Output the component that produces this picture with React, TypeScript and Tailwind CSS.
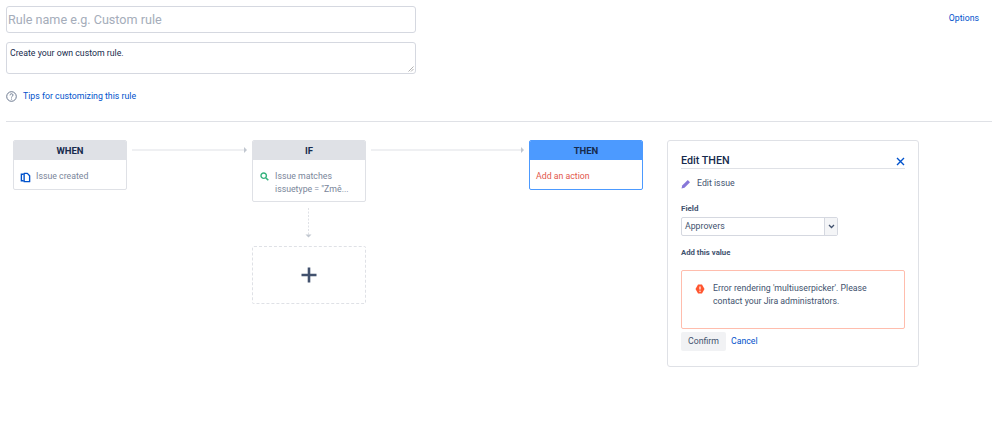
const font = { fontFamily: 'Roboto, sans-serif' };

function Arrow({ width }: { width: number }) {
  return (
    <svg width={width} height="8" viewBox={`0 0 ${width} 8`} className="block">
      <path d={`M0 4H${width - 3}`} stroke="#dfe1e6" strokeWidth="1" />
      <path d={`M${width - 3} 1l3 3-3 3z`} fill="#c1c7d0" />
    </svg>
  );
}

function Card({
  title,
  active,
  children,
}: {
  title: string;
  active?: boolean;
  children: React.ReactNode;
}) {
  return (
    <div
      className={`w-[114px] shrink-0 overflow-hidden rounded-[2px] border bg-white ${
        active ? "border-[#4c9aff]" : "border-[#dfe1e6]"
      }`}
    >
      <div
        className={`flex h-[19px] items-center justify-center pt-[1px] text-[9.5px] font-bold text-[#172b4d] ${
          active ? "bg-[#4c9aff]" : "bg-[#dfe1e6]"
        }`}
      >
        {title}
      </div>
      {children}
    </div>
  );
}

export default function App() {
  return (
    <div
      className="flex h-[435px] w-[998px] flex-col overflow-hidden bg-white pl-[6px] pr-[6px] pt-[6px] text-[#42526e]"
      style={font}
    >
      <div className="flex items-start justify-between">
        <div className="flex w-[410px] flex-col">
          <div className="flex h-[27px] items-center rounded-[3px] border border-[#d5d8e0] px-[1px] pt-[1px] text-[12.6px] text-[#a5adba]">
            Rule name e.g. Custom rule
          </div>
          <div className="relative mt-[9px] h-[32px] rounded-[3px] border border-[#d5d8e0] px-[3px] pt-[3px] text-[8.75px] leading-[14px] text-[#172b4d]">
            Create your own custom rule.
            <svg width="6" height="6" viewBox="0 0 6 6" className="absolute bottom-[1px] right-[1px]">
              <path d="M0.5 5.5L5.5 0.5M3 5.5L5.5 3" stroke="#8f8f8f" strokeWidth="0.7" />
            </svg>
          </div>
          <div className="mt-[15px] flex h-[14px] items-center">
            <svg width="11" height="11" viewBox="0 0 11 11" fill="none" className="shrink-0">
              <circle cx="5.5" cy="5.5" r="4.8" stroke="#5e6c84" strokeWidth="0.9" />
              <path d="M4 4.3c0-2 3-2 3-.2 0 1.1-1.5 1.1-1.5 2.4" stroke="#5e6c84" strokeWidth="0.9" />
              <circle cx="5.5" cy="8" r="0.6" fill="#5e6c84" />
            </svg>
            <a className="ml-[6px] pt-[1px] text-[8.75px] text-[#0052cc]">Tips for customizing this rule</a>
          </div>
        </div>
        <a className="mr-[13px] mt-[6px] text-[8.75px] leading-[12px] text-[#0052cc]">Options</a>
      </div>

      <div className="mt-[18px] h-px bg-[#dfe1e6]" />

      <div className="mt-[18px] flex items-start pl-[7px]">
        <Card title="WHEN">
          <div className="flex h-[29px] items-center pl-[6px] pt-[5px] text-[8.75px] text-[#7a869a]">
            <svg width="11" height="11" viewBox="0 0 12 12" className="shrink-0" fill="none">
              <path d="M4 2.5H1.5v7H4" stroke="#0052cc" strokeWidth="1.5" />
              <path d="M4.5 1.5h3.5l2.5 2.5v6.5h-6z" stroke="#0052cc" strokeWidth="1.5" strokeLinejoin="round" />
            </svg>
            <span className="ml-[5px]">Issue created</span>
          </div>
        </Card>
        <div className="ml-[5px] mr-[5px] mt-[6px]">
          <Arrow width={115} />
        </div>

        <div className="flex flex-col items-center">
          <Card title="IF">
            <div className="flex h-[41px] items-start pl-[7px] pt-[10px] text-[8.75px] leading-[13px] text-[#7a869a]">
              <svg width="9" height="9" viewBox="0 0 9 9" className="mt-[2px] shrink-0" fill="none">
                <circle cx="3.7" cy="3.7" r="2.7" stroke="#36b37e" strokeWidth="1.4" />
                <path d="M5.7 5.7L8.3 8.3" stroke="#36b37e" strokeWidth="1.6" />
              </svg>
              <span className="ml-[6px]">
                Issue matches
                <br />
                issuetype = "Změ...
              </span>
            </div>
          </Card>
          <svg width="8" height="31" viewBox="0 0 8 31" className="mt-[6px] block">
            <path d="M3.5 0V27" stroke="#dfe1e6" strokeDasharray="2 1.5" />
            <path d="M0.5 26.5h6l-3 3z" fill="#c1c7d0" />
          </svg>
          <div className="mt-[7px] flex h-[58px] w-[114px] items-center justify-center rounded-[2px] border border-dashed border-[#dfe1e6]">
            <svg width="16" height="16" viewBox="0 0 16 16">
              <path d="M8 0.5V15.5M0.5 8H15.5" stroke="#42526e" strokeWidth="2.6" />
            </svg>
          </div>
        </div>

        <div className="ml-[5px] mr-[5px] mt-[6px]">
          <Arrow width={153} />
        </div>

        <Card title="THEN" active>
          <div className="flex h-[29px] items-center pl-[6px] pt-[5px] text-[8.75px] text-[#e2574c]">Add an action</div>
        </Card>

        <div className="ml-[24px] flex h-[227px] w-[252px] shrink-0 flex-col rounded-[3px] border border-[#dfe1e6] px-[13px] pt-[10px]">
          <div className="flex h-[18px] items-end justify-between border-b border-[#dfe1e6]">
            <span className="text-[10.75px] font-medium leading-[14px] text-[#172b4d]">Edit THEN</span>
            <svg width="9" height="9" viewBox="0 0 9 9" className="mb-[2px]">
              <path d="M1 1L8 8M8 1L1 8" stroke="#0052cc" strokeWidth="1.4" />
            </svg>
          </div>
          <div className="mt-[8px] flex h-[14px] items-center text-[8.75px]">
            <svg width="10" height="10" viewBox="0 0 10 10" className="shrink-0">
              <path d="M0.5 9.5l.7-3L6.8 1l2.2 2.2-5.5 5.5z" fill="#8777d9" />
            </svg>
            <span className="ml-[6px]">Edit issue</span>
          </div>
          <div className="mt-[12px] text-[8px] font-bold leading-[12px]">Field</div>
          <div className="mt-[2px] flex h-[19px] w-[157px] items-center rounded-[2px] border border-[#d5d8e0] text-[8.75px]">
            <span className="flex-1 pl-[3px]">Approvers</span>
            <span className="flex h-full w-[13px] items-center justify-center border-l border-[#d5d8e0] bg-[#f4f5f7]">
              <svg width="7" height="5" viewBox="0 0 7 5" fill="none">
                <path d="M1 1l2.5 2.5L6 1" stroke="#42526e" strokeWidth="1.3" />
              </svg>
            </span>
          </div>
          <div className="mt-[11px] text-[7.75px] font-bold leading-[12px]">Add this value</div>
          <div className="mt-[11px] flex h-[59px] items-start rounded-[2px] border border-[#ffbdad] pl-[13px] pt-[11px] text-[8.75px] leading-[13px]">
            <svg width="10" height="10" viewBox="0 0 10 10" className="mt-[2px] shrink-0">
              <path d="M3 0.5h4L9.5 5 7 9.5H3L0.5 5z" fill="#ff5630" />
              <path d="M5 2.5V5.5" stroke="#fff" strokeWidth="1.2" />
              <circle cx="5" cy="7.2" r="0.7" fill="#fff" />
            </svg>
            <span className="ml-[8px] w-[178px]">
              Error rendering 'multiuserpicker'. Please contact your Jira administrators.
            </span>
          </div>
          <div className="mt-[3px] flex items-center">
            <span className="flex h-[19px] w-[45px] items-center justify-center rounded-[2px] bg-[#f1f2f4] text-[8.75px]">
              Confirm
            </span>
            <a className="ml-[5px] text-[8.75px] text-[#0052cc]">Cancel</a>
          </div>
        </div>
      </div>
    </div>
  );
}
